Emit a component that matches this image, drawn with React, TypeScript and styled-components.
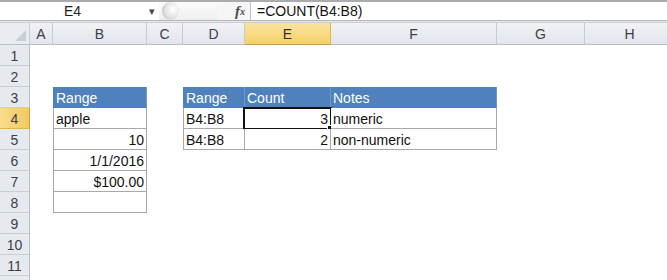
import styled, {createGlobalStyle} from 'styled-components';

const GlobalStyle = createGlobalStyle`
  html, body {
    margin: 0;
    padding: 0;
    background: #ffffff;
  }
  body {
    font-family: "Liberation Sans", Arial, sans-serif;
    overflow: hidden;
  }
`;

const columns = [
    {name: 'A', width: 23},
    {name: 'B', width: 94},
    {name: 'C', width: 36},
    {name: 'D', width: 62},
    {name: 'E', width: 86},
    {name: 'F', width: 166},
    {name: 'G', width: 88},
    {name: 'H', width: 90},
];

type CellData = {
    text?: string;
    right?: boolean;
    header?: boolean;
    boxed?: boolean;
    first?: boolean;
    active?: boolean;
};

// sheet content keyed by row then column letter
const data: Record<number, Record<string, CellData>> = {
    3: {
        B: {text: 'Range', header: true, boxed: true, first: true},
        D: {text: 'Range', header: true, boxed: true, first: true},
        E: {text: 'Count', header: true, boxed: true},
        F: {text: 'Notes', header: true, boxed: true},
    },
    4: {
        B: {text: 'apple', boxed: true, first: true},
        D: {text: 'B4:B8', boxed: true, first: true},
        E: {text: '3', right: true, boxed: true, active: true},
        F: {text: 'numeric', boxed: true},
    },
    5: {
        B: {text: '10', right: true, boxed: true, first: true},
        D: {text: 'B4:B8', boxed: true, first: true},
        E: {text: '2', right: true, boxed: true},
        F: {text: 'non-numeric', boxed: true},
    },
    6: {B: {text: '1/1/2016', right: true, boxed: true, first: true}},
    7: {B: {text: '$100.00', right: true, boxed: true, first: true}},
    8: {B: {boxed: true, first: true}},
};

const rowCount = 11;

export default function App() {
    return (
        <>
            <GlobalStyle/>
            <Window>
                <FormulaBar>
                    <NameBox>E4</NameBox>
                    <DropArrow>▾</DropArrow>
                    <Grip>
                        <GripKnob/>
                    </Grip>
                    <FxLabel>f<sub>x</sub></FxLabel>
                    <FormulaInput>=COUNT(B4:B8)</FormulaInput>
                </FormulaBar>
                <Sheet $cols={columns.map(c => c.width + 'px').join(' ')}>
                    <Corner>
                        <CornerTriangle/>
                    </Corner>
                    {columns.map(c => (
                        <ColHeader key={c.name} $selected={c.name === 'E'}>{c.name}</ColHeader>
                    ))}
                    {Array.from({length: rowCount}, (_, i) => i + 1).map(r => (
                        <Row key={r} r={r}/>
                    ))}
                    {/* next row only peeks in at the bottom edge */}
                    <RowHeader/>
                </Sheet>
            </Window>
        </>
    );
}

const Row = ({r}: { r: number }) => {
    const cells = data[r] || {};
    return (
        <>
            <RowHeader $selected={r === 4}>{r}</RowHeader>
            {columns.map(c => {
                const cell = cells[c.name] || {};
                return (
                    <Cell key={c.name}
                          $right={cell.right}
                          $header={cell.header}
                          $boxed={cell.boxed}
                          $first={cell.first}>
                        {cell.text}
                        {cell.active && (
                            <ActiveBox>
                                <FillHandle/>
                            </ActiveBox>
                        )}
                    </Cell>
                );
            })}
        </>
    );
};

const Window = styled.div`
  width: 667px;
  height: 280px;
  overflow: hidden;
  display: flex;
  flex-direction: column;
  background: #ffffff;
`;

const FormulaBar = styled.div`
  height: 20px;
  display: flex;
  align-items: stretch;
  border-top: 2px solid #a9abae;
  border-bottom: 1px solid #b4b6ba;
  box-shadow: 0 1px 0 #e8e9eb, 0 2px 0 #c9ccd1;
  margin-bottom: 2px;
  background: #f6f6f6;
`;

const NameBox = styled.div`
  width: 145px;
  background: #ffffff;
  display: flex;
  align-items: center;
  justify-content: center;
  font-size: 14px;
  color: #1e1e1e;
`;

const DropArrow = styled.div`
  width: 14px;
  background: #ffffff;
  display: flex;
  align-items: center;
  justify-content: center;
  font-size: 11px;
  color: #444;
`;

const Grip = styled.div`
  width: 58px;
  display: flex;
  align-items: center;
  background: linear-gradient(#fbfbfb, #eeeeee);
`;

const GripKnob = styled.div`
  width: 15px;
  height: 18px;
  margin-left: 3px;
  border-radius: 50%;
  background: radial-gradient(circle at 60% 40%, #ffffff 0%, #e4e4e4 55%, #c9c9c9 100%);
  border-left: 2px solid #cfcfcf;
`;

const FxLabel = styled.div`
  width: 28px;
  display: flex;
  align-items: center;
  justify-content: flex-end;
  padding-right: 5px;
  font-family: "Liberation Serif", "Times New Roman", serif;
  font-style: italic;
  font-weight: bold;
  font-size: 15px;
  color: #4a4a4a;
  border-right: 1px solid #c3c3c3;
  background: #f6f6f6;

  sub {
    font-size: 10px;
    vertical-align: -1px;
  }
`;

const FormulaInput = styled.div`
  flex: 1;
  background: #ffffff;
  display: flex;
  align-items: center;
  padding-left: 6px;
  font-size: 14px;
  color: #111;
`;

const Sheet = styled.div<{ $cols: string }>`
  display: grid;
  grid-template-columns: 30px ${p => p.$cols};
  grid-template-rows: 22px;
  grid-auto-rows: 21px;
`;

const Corner = styled.div`
  position: relative;
  background: #e9ecf0;
  border-right: 1px solid #c6cbd3;
  border-bottom: 1px solid #b9bec7;
`;

const CornerTriangle = styled.div`
  position: absolute;
  right: 3px;
  bottom: 3px;
  width: 0;
  height: 0;
  border-left: 11px solid transparent;
  border-bottom: 11px solid #c9cdd3;
`;

const ColHeader = styled.div<{ $selected?: boolean }>`
  display: flex;
  align-items: center;
  justify-content: center;
  font-size: 14px;
  color: ${p => (p.$selected ? '#333' : '#3c4048')};
  background: ${p => (p.$selected
          ? 'linear-gradient(#fbe4a0, #f6cf6a)'
          : 'linear-gradient(#f1f3f6, #e1e5ea)')};
  border-right: 1px solid ${p => (p.$selected ? '#e2b44a' : '#c6cbd3')};
  border-bottom: 1px solid ${p => (p.$selected ? '#c9a04a' : '#b9bec7')};
`;

const RowHeader = styled.div<{ $selected?: boolean }>`
  display: flex;
  align-items: center;
  justify-content: center;
  padding-top: 1px;
  font-size: 14px;
  color: #3c4048;
  background: ${p => (p.$selected ? 'linear-gradient(90deg, #f9dc8e, #f3c95e)' : '#e6e9ee')};
  border-right: 1px solid ${p => (p.$selected ? '#c9a04a' : '#b9bec7')};
  border-bottom: 1px solid ${p => (p.$selected ? '#e2b44a' : '#c9ced6')};
`;

const Cell = styled.div<{ $right?: boolean; $header?: boolean; $boxed?: boolean; $first?: boolean }>`
  position: relative;
  display: flex;
  align-items: center;
  justify-content: ${p => (p.$right ? 'flex-end' : 'flex-start')};
  padding: 2px 2px 0 2px;
  font-size: 14px;
  white-space: nowrap;
  color: ${p => (p.$header ? '#ffffff' : '#111')};
  background: ${p => (p.$header ? '#4f81bd' : '#ffffff')};
  border-right: 1px solid ${p => (p.$boxed ? (p.$header ? '#6f97c9' : '#a9a9a9') : 'transparent')};
  border-bottom: 1px solid ${p => (p.$boxed ? (p.$header ? '#4f81bd' : '#a9a9a9') : 'transparent')};
  border-left: ${p => (p.$first ? `1px solid ${p.$header ? '#4f81bd' : '#a9a9a9'}` : 'none')};
  box-sizing: border-box;
`;

const ActiveBox = styled.div`
  position: absolute;
  left: -2px;
  top: -1px;
  right: -2px;
  bottom: -2px;
  border: 2px solid #111;
  pointer-events: none;
`;

const FillHandle = styled.div`
  position: absolute;
  right: -4px;
  bottom: -4px;
  width: 5px;
  height: 5px;
  background: #111;
  border: 1px solid #fff;
`;
